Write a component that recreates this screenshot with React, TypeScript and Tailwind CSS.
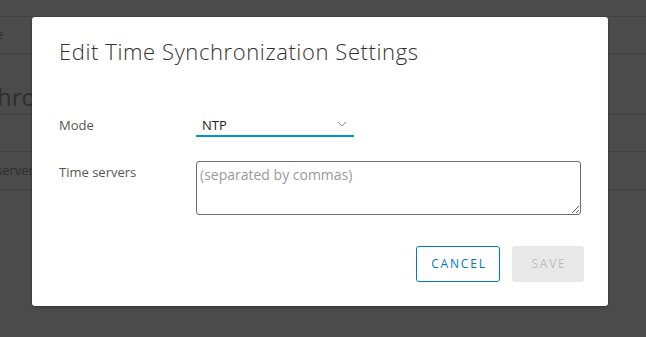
import React from "react";

export default function App() {
  const font = { fontFamily: "'Open Sans', Lato, sans-serif" };
  return (
    <div className="relative w-[646px] h-[337px] overflow-hidden bg-[#4b4b4b]" style={font}>
      {/* background page (dimmed) */}
      <div className="flex flex-col text-[#2e2e2e]">
        <div className="h-[17px] border-b border-[#434343]" />
        <div className="h-[37px] border-b border-[#434343] flex items-center text-[13px] -ml-[4px]">e</div>
        <div className="h-[61px] border-b border-[#434343] flex items-end pb-[2px] text-[24px] leading-[30px] -ml-[3px]">hronization</div>
        <div className="h-[37px] border-b border-[#434343]" />
        <div className="h-[38px] border-b border-[#434343] flex items-center text-[13px] -ml-[4px]">servers</div>
      </div>

      {/* modal */}
      <div className="absolute left-[32px] top-[17px] w-[576px] h-[289px] bg-white rounded-[3px] shadow-[0_1px_3px_rgba(0,0,0,0.35)] flex flex-col pl-[27px] pr-[24px]">
        <h1 className="mt-[19px] text-[22px] leading-[30px] font-light text-[#313131] tracking-[0.6px]">
          Edit Time Synchronization Settings
        </h1>

        <div className="mt-[51px] flex items-end h-[20px]">
          <div className="w-[137px] text-[13px] text-[#565656] leading-[16px] pb-[4px]">Mode</div>
          <div className="w-[158px] h-[22px] border-b-2 border-[#0094d2] flex items-center justify-between pl-[6px] pr-[7px]">
            <span className="text-[13px] text-[#222] leading-[16px] -mt-[1px]">NTP</span>
            <svg width="10" height="6" viewBox="0 0 10 6" className="mb-[3px]">
              <path d="M1 1 L5 5 L9 1" fill="none" stroke="#8c8c8c" strokeWidth="1" />
            </svg>
          </div>
        </div>

        <div className="mt-[24px] flex items-start">
          <div className="w-[137px] text-[13px] text-[#565656] leading-[16px] pt-[3px]">Time servers</div>
          <textarea
            placeholder="(separated by commas)"
            className="w-[385px] h-[54px] border border-[#6f6f6f] rounded-[3px] px-[3px] py-[3px] text-[14px] leading-[20px] text-[#333] placeholder:text-[#9a9a9a] outline-none resize"
          />
        </div>

        <div className="mt-[31px] flex justify-end gap-[12px] pr-0">
          <button className="w-[84px] h-[36px] border border-[#0079b8] rounded-[3px] text-[12px] font-medium tracking-[1.8px] text-[#0079b8] bg-white pl-[2px]">
            CANCEL
          </button>
          <button className="w-[72px] h-[36px] rounded-[3px] text-[12px] font-medium tracking-[1.8px] text-[#bdbdbd] bg-[#e9e9e9] pl-[2px]">
            SAVE
          </button>
        </div>
      </div>
    </div>
  );
}
